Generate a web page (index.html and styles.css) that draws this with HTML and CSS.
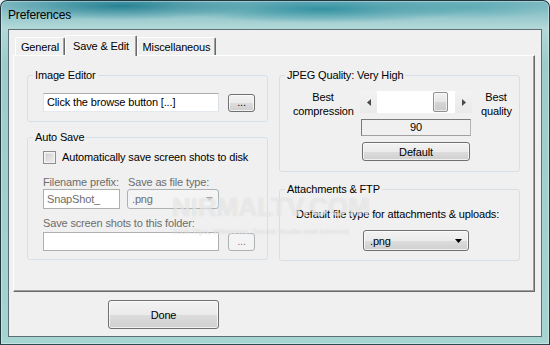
FILE: index.html
```html
<!DOCTYPE html>
<html lang="en">
<head>
    <meta charset="UTF-8">
    <title>Preferences</title>
    <link rel="stylesheet" href="styles.css">
</head>
<body>

<div class="window">
    <div class="titlebar">Preferences</div>

    <div class="client">
        <div class="tabs">
            <div class="tab tab-general">General</div>
            <div class="tab tab-active">Save &amp; Edit</div>
            <div class="tab tab-misc">Miscellaneous</div>
        </div>

        <div class="panel">
            <div class="column">
                <fieldset class="group">
                    <legend>Image Editor</legend>
                    <div class="group-body editor-body">
                        <div class="field-row">
                            <div class="textbox path">Click the browse button [...]</div>
                            <div class="button browse">...</div>
                        </div>
                    </div>
                </fieldset>

                <fieldset class="group autosave">
                    <legend>Auto Save</legend>
                    <div class="group-body autosave-body">
                        <div class="check-row">
                            <span class="checkbox"></span>
                            <span>Automatically save screen shots to disk</span>
                        </div>
                        <div class="prefix-grid">
                            <span class="label disabled prefix-label">Filename prefix:</span>
                            <span class="label disabled type-label">Save as file type:</span>
                            <div class="textbox disabled prefix">SnapShot_</div>
                            <div class="combo disabled type-combo">
                                <span>.png</span>
                                <svg width="7" height="4" viewBox="0 0 7 4"><polygon points="0,0 7,0 3.5,4" fill="#a6a6a6"/></svg>
                            </div>
                        </div>
                        <div class="label disabled folder-label">Save screen shots to this folder:</div>
                        <div class="field-row folder-row">
                            <div class="textbox disabled path"></div>
                            <div class="button browse disabled">...</div>
                        </div>
                    </div>
                </fieldset>
            </div>

            <div class="column">
                <fieldset class="group">
                    <legend>JPEG Quality: Very High</legend>
                    <div class="group-body quality-body">
                        <div class="side-label">Best<br>compression</div>
                        <div class="slider">
                            <div class="slider-arrow">
                                <svg width="4" height="7" viewBox="0 0 4 7"><polygon points="4,0 4,7 0,3.5" fill="#4a4a4a"/></svg>
                            </div>
                            <div class="slider-track">
                                <div class="slider-thumb"></div>
                            </div>
                            <div class="slider-arrow">
                                <svg width="4" height="7" viewBox="0 0 4 7"><polygon points="0,0 0,7 4,3.5" fill="#4a4a4a"/></svg>
                            </div>
                        </div>
                        <div class="side-label side-right">Best<br>quality</div>
                        <div class="quality-value">90</div>
                        <div class="button default-btn">Default</div>
                    </div>
                </fieldset>

                <fieldset class="group ftp">
                    <legend>Attachments &amp; FTP</legend>
                    <div class="group-body ftp-body">
                        <div class="label">Default file type for attachments &amp; uploads:</div>
                        <div class="combo ftp-combo">
                            <span>.png</span>
                            <svg width="7" height="4" viewBox="0 0 7 4"><polygon points="0,0 7,0 3.5,4" fill="#000"/></svg>
                        </div>
                    </div>
                </fieldset>
            </div>
        </div>

        <div class="footer">
            <div class="button done">Done</div>
        </div>
    </div>

    <div class="watermark">
        NIRMALTV.COM
        <small>Tech Tips, Windows, Social Media and Internet</small>
    </div>
</div>

</body>
</html>
```

FILE: styles.css
```css
* {
    box-sizing: border-box;
}

body {
    margin: 0;
    font-family: 'Liberation Sans', Arial, sans-serif;
    font-size: 11px;
    letter-spacing: -0.15px;
    color: #000;
    background-color: #e4f0f1;
}

.window {
    position: relative;
    width: 550px;
    height: 345px;
    border: 1px solid #22363d;
    border-bottom-color: #2b4a52;
    border-radius: 7px 7px 0 0;
    padding: 0 7px 7px 7px;
    overflow: hidden;
    background:
        radial-gradient(ellipse 130px 14px at 120px 5px, rgba(22, 120, 140, 0.85), rgba(22, 120, 140, 0)),
        radial-gradient(ellipse 150px 14px at 320px 8px, rgba(30, 135, 152, 0.8), rgba(30, 135, 152, 0)),
        radial-gradient(ellipse 90px 12px at 470px 6px, rgba(70, 160, 172, 0.6), rgba(70, 160, 172, 0)),
        linear-gradient(to bottom, #7db8c1 0, #93c6cb 14px, #b3d8d8 27px, #9dcdcb 60px, #a5d4d1 100%);
    box-shadow: inset 0 0 0 1px rgba(255, 255, 255, 0.35);
}

.titlebar {
    height: 28px;
    line-height: 28px;
    font-size: 12px;
    color: #000;
}

.client {
    height: 308px;
    border: 1px solid #5b6f75;
    background-color: #f0f0f0;
    padding: 5px 0 0 4px;
}

/* tabs */

.tabs {
    position: relative;
    z-index: 1;
    display: flex;
    align-items: flex-end;
    height: 21px;
    padding-left: 2px;
}

.tab {
    height: 18px;
    margin-bottom: 1px;
    padding-top: 3px;
    line-height: 13px;
    text-align: center;
    background-color: #f0f0f0;
    border: 1px solid #fff;
    border-right-color: #696969;
    border-bottom: none;
    border-radius: 2px 2px 0 0;
    box-shadow: inset -1px 0 #a0a0a0;
}

.tab-general {
    width: 50px;
}

.tab-active {
    width: 72px;
    height: 21px;
    margin-bottom: 0;
    padding-top: 4px;
}

.tab-misc {
    width: 79px;
}

.panel {
    width: 522px;
    height: 237px;
    margin-top: -1px;
    border: 1px solid;
    border-color: #fff #696969 #696969 #fff;
    box-shadow: inset -1px -1px #a0a0a0;
    padding: 13px 0 0 13px;
    display: grid;
    grid-template-columns: 241px 241px;
    column-gap: 11px;
    align-items: start;
}

.column {
    display: flex;
    flex-direction: column;
}

/* group boxes */

.group {
    margin: 0;
    padding: 0;
    min-width: 0;
    border: 1px solid #d5dfe5;
    border-radius: 3px;
}

.group legend {
    margin-left: 5px;
    padding: 0 2px;
    line-height: 13px;
}

.autosave {
    margin-top: 9px;
}

.ftp {
    margin-top: 11px;
}

.editor-body {
    padding: 11px 0 9px 15px;
}

.autosave-body {
    padding: 7px 0 8px 15px;
}

.quality-body {
    padding: 8px 0 10px 13px;
    display: grid;
    grid-template-columns: 67px 112px 39px;
    align-items: start;
}

.ftp-body {
    padding: 12px 0 9px 16px;
}

.label {
    line-height: 13px;
    white-space: nowrap;
}

.disabled {
    color: #6d6d6d;
}

/* inputs */

.field-row {
    display: flex;
    align-items: flex-end;
    gap: 9px;
}

.folder-row {
    margin-top: 2px;
}

.textbox {
    height: 19px;
    padding: 0 3px;
    line-height: 17px;
    background-color: #fff;
    border: 1px solid;
    border-color: #abadb3 #dbdfe6 #e3e9ef #e2e3ea;
    white-space: nowrap;
    overflow: hidden;
}

.textbox.disabled {
    border-color: #afafaf;
}

.path {
    width: 176px;
}

.prefix {
    width: 77px;
    height: 20px;
    line-height: 18px;
}

.check-row {
    display: flex;
    align-items: center;
    gap: 6px;
    height: 13px;
    line-height: 13px;
}

.checkbox {
    width: 13px;
    height: 13px;
    border: 1px solid #8e8f8f;
    background: linear-gradient(135deg, #c9c9c9, #f3f3f3);
    box-shadow: inset 0 0 0 1px #f4f4f4, inset 0 0 0 2px #e6e6e6;
}

.prefix-grid {
    margin-top: 12px;
    display: grid;
    grid-template-columns: 77px 92px;
    column-gap: 7px;
}

.type-label {
    padding-left: 1px;
}

.folder-label {
    margin-top: 8px;
}

.combo {
    display: flex;
    align-items: center;
    justify-content: space-between;
    border-radius: 3px;
}

.combo.disabled {
    width: 92px;
    height: 20px;
    padding: 0 5px 0 4px;
    border: 1px solid #adb2b5;
    background-color: #f4f4f4;
}

.ftp-combo {
    width: 106px;
    height: 21px;
    margin: 9px 0 0 67px;
    padding: 0 6px 0 6px;
    border: 1px solid #707070;
    background: linear-gradient(to bottom, #f2f2f2 0%, #ebebeb 50%, #dddddd 50%, #cfcfcf 100%);
    box-shadow: inset 0 0 0 1px rgba(255, 255, 255, 0.7);
}

/* buttons */

.button {
    display: flex;
    align-items: center;
    justify-content: center;
    border: 1px solid #707070;
    border-radius: 3px;
    background: linear-gradient(to bottom, #f2f2f2 0%, #ebebeb 50%, #dddddd 50%, #cfcfcf 100%);
    box-shadow: inset 0 0 0 1px rgba(255, 255, 255, 0.7);
}

.button.disabled {
    border-color: #adb2b5;
    background: #f4f4f4;
    box-shadow: none;
    color: #838383;
}

.browse {
    width: 27px;
    height: 18px;
    padding-bottom: 2px;
}

.default-btn {
    grid-column: 2;
    height: 19px;
    margin: 6px 2px 0 2px;
}

.done {
    width: 111px;
    height: 29px;
}

.footer {
    padding: 8px 0 0 95px;
}

/* jpeg slider */

.side-label {
    width: 60px;
    line-height: 14px;
    text-align: center;
}

.side-right {
    width: 30px;
    justify-self: end;
}

.slider {
    display: flex;
    height: 22px;
    margin-top: 1px;
}

.slider-arrow {
    width: 17px;
    display: flex;
    align-items: center;
    justify-content: center;
    background: linear-gradient(to bottom, #f3f3f3, #e9e9e9);
}

.slider-track {
    position: relative;
    flex: 1;
    background-color: #fff;
}

.slider-thumb {
    position: absolute;
    left: 56px;
    top: 1px;
    width: 15px;
    height: 20px;
    border: 1px solid #8e8f8f;
    border-radius: 2px;
    background: linear-gradient(to bottom, #f2f2f2 0%, #e6e6e6 50%, #d6d6d6 50%, #cbcbcb 100%);
    box-shadow: inset 0 0 0 1px rgba(255, 255, 255, 0.6);
}

.quality-value {
    grid-column: 2;
    height: 17px;
    margin: 1px 1px 0 1px;
    line-height: 15px;
    text-align: center;
    border: 1px solid;
    border-color: #7a7a7a #b4b4b4 #a0a0a0 #7a7a7a;
}

/* watermark */

.watermark {
    position: absolute;
    left: 171px;
    top: 193px;
    font-size: 26px;
    font-weight: bold;
    line-height: 26px;
    letter-spacing: 0;
    color: rgba(255, 255, 255, 0.55);
    text-shadow: 0 0 1px rgba(140, 140, 140, 0.35);
    pointer-events: none;
}

.watermark small {
    display: block;
    font-size: 8px;
    line-height: 10px;
    margin-top: 7px;
}
```
